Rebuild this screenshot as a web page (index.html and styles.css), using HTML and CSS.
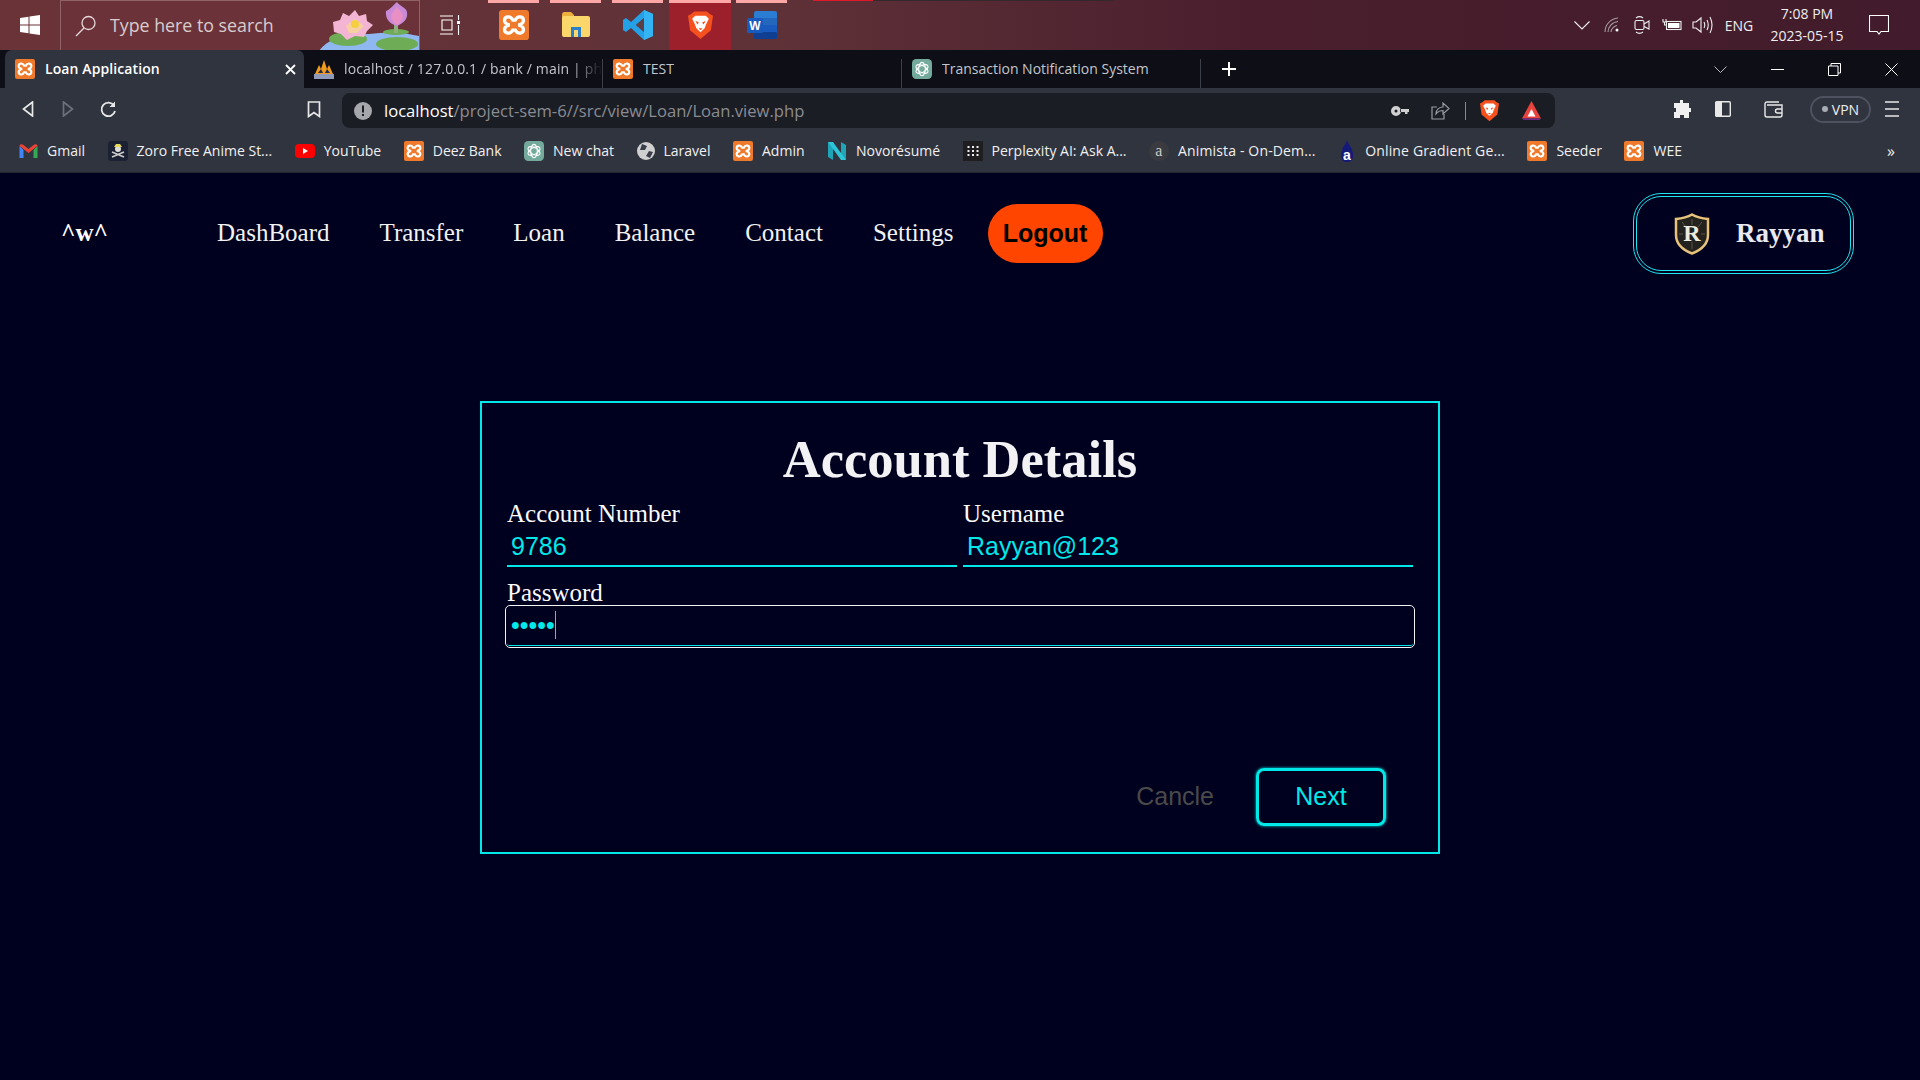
FILE: index.html
```html
<!DOCTYPE html>
<html lang="en">
<head>
    <meta charset="UTF-8">
    <title>Loan Application</title>
    <link rel="stylesheet" href="styles.css">
</head>
<body>
    <svg class="defs" width="0" height="0">
        <symbol id="xampp" viewBox="0 0 24 24">
            <rect width="24" height="24" rx="2.5" fill="#ef7a2b"/>
            <path d="M11 8C9 4 4 5 4.500 9C4.800 10.800 6.500 11.500 8.500 12C6.500 12.500 4.800 13.200 4.500 15C4 19 9 20 11 16H13C15 20 20 19 19.500 15C19.200 13.200 17.500 12.500 15.500 12C17.500 11.500 19.200 10.800 19.500 9C20 5 15 4 13 8Z" fill="none" stroke="#fff" stroke-width="2.600"/>
        </symbol>
        <symbol id="gpt" viewBox="0 0 24 24">
            <rect width="24" height="24" rx="5" fill="#74aa9c"/>
            <g fill="none" stroke="#fff" stroke-width="1.300">
                <ellipse cx="12" cy="12" rx="4" ry="8"/>
                <ellipse cx="12" cy="12" rx="4" ry="8" transform="rotate(60 12 12)"/>
                <ellipse cx="12" cy="12" rx="4" ry="8" transform="rotate(120 12 12)"/>
            </g>
        </symbol>
        <symbol id="brave" viewBox="0 0 24 28">
            <path d="M6 1H18L21 3.500L24 5L22 19L12 27.500L2 19L0 5L3 3.500Z" fill="#f4511e"/>
            <path d="M7 5H17L20 8L17.500 13L16 17L12 21L8 17L6.500 13L4 8Z" fill="#fff"/>
            <path d="M7 10L10.500 11.500L9 13.500ZM17 10L13.500 11.500L15 13.500ZM10 17H14L12 19Z" fill="#f4511e"/>
        </symbol>
    </svg>

    <div class="taskbar">
        <div class="start">
            <svg width="20" height="20" viewBox="0 0 20 20" fill="#fff"><path d="M0 3L8.500 1.700V9.500H0ZM9.500 1.500L20 0V9.500H9.500ZM0 10.500H8.500V18.300L0 17ZM9.500 10.500H20V20L9.500 18.500Z"/></svg>
        </div>
        <div class="search">
            <svg class="search-icon" width="22" height="22" viewBox="0 0 22 22" fill="none" stroke="#e6d9da" stroke-width="1.300"><circle cx="13.500" cy="8" r="6.500"/><path d="M9 13L1 21"/></svg>
            <span class="search-text">Type here to search</span>
            <svg class="lotus" width="100" height="50" viewBox="0 0 100 50">
                <path d="M0 50C8 38 25 32 50 33C75 30 90 33 100 35V50Z" fill="#90b8f0"/>
                <ellipse cx="29" cy="38" rx="19" ry="7" fill="#6eac55"/>
                <ellipse cx="78" cy="43" rx="21" ry="7" fill="#6eac55"/>
                <ellipse cx="77" cy="31" rx="13" ry="3" fill="#6eac55"/>
                <path d="M14 21L21 19L24 12L30 15L36 9L40 15L47 13L48 20L54 24L48 30L45 36L36 35L28 39L22 33L15 31Z" fill="#f4b4d4"/>
                <path d="M27 25L36 18L45 25L38 32H30Z" fill="#f6d0a0"/>
                <circle cx="36" cy="23" r="4" fill="#f5cf3f"/>
                <path d="M75 32H79V22H75Z" fill="#8fb07a"/>
                <path d="M67 10C72 8 74 4 78 1C80 5 87 6 88 11C89 18 85 22 78 25C71 23 66 18 67 10Z" fill="#c98ad8"/>
                <path d="M72 14C74 11 76 8 78 6C81 10 84 12 84 16C83 20 80 23 78 24C75 22 72 19 72 14Z" fill="#ea8fc4"/>
            </svg>
        </div>
        <div class="taskview">
            <svg width="20" height="20" viewBox="0 0 20 20" fill="none" stroke="#fff" stroke-width="1.100"><path d="M0 1H13M0 19H13M2 5H12V15H2ZM18.500 0V5M18.500 10V20"/><rect x="17" y="6" width="3" height="3" fill="#fff" stroke="none"/></svg>
        </div>
        <div class="apps">
            <div class="app open"><svg width="30" height="30"><use href="#xampp"/></svg></div>
            <div class="app open">
                <svg width="28" height="26" viewBox="0 0 28 26"><path d="M0 3C0 1 1 0 2 0H9L12 3V8H0Z" fill="#eeb03c"/><rect y="4" width="28" height="21" rx="2" fill="#fbd66a"/><path d="M9 25V15H19V25H16V18H12V25Z" fill="#2a7fc9"/></svg>
            </div>
            <div class="app open">
                <svg width="30" height="30" viewBox="0 0 30 30"><path d="M21 0L30 4V26L21 30L8 18L3 22L0 20V10L3 8L8 12ZM21 8L13 15L21 22Z" fill="#23a0e6"/><path d="M21 0L30 4V26L21 30Z" fill="#34b4f2"/><path d="M21 8L21 22L13 15Z" fill="#5b4045"/></svg>
            </div>
            <div class="app active"><svg width="25" height="30"><use href="#brave"/></svg></div>
            <div class="app open">
                <svg width="30" height="28" viewBox="0 0 30 28"><rect x="7" width="23" height="28" rx="2" fill="#2b7cd3"/><rect x="7" y="7" width="23" height="7" fill="#2368bd"/><rect x="7" y="14" width="23" height="7" fill="#185abd"/><rect x="7" y="21" width="23" height="7" rx="1" fill="#103f91"/><rect y="7" width="16" height="15" rx="1.500" fill="#185abd"/><text x="8" y="19" class="word-w" text-anchor="middle">W</text></svg>
            </div>
            <div class="app-progress"></div>
        </div>
        <div class="tray">
            <div class="tray-cell"><svg width="16" height="9" viewBox="0 0 16 9" fill="none" stroke="#eee" stroke-width="1.100"><path d="M.5 .5L8 8L15.500 .5"/></svg></div>
            <div class="tray-cell"><svg width="16" height="16" viewBox="0 0 16 16" fill="none" stroke="#a59ba0" stroke-width="1.100"><path d="M1 15C1 8 6 2 14 1M4 15C4 10 8 5 14 4.500M7 15C7 12 10 9 13 8.500"/><circle cx="13" cy="13" r="1.500" fill="#fff" stroke="none"/></svg></div>
            <div class="tray-cell"><svg width="16" height="18" viewBox="0 0 16 18" fill="none" stroke="#eee" stroke-width="1.100"><rect x="1" y="4.500" width="9" height="9" rx="1.500"/><path d="M10 8L15 5V13L10 10.500M2 2C4 .5 7 .5 9 2M2 16C4 17.500 7 17.500 9 16"/></svg></div>
            <div class="tray-cell"><svg width="20" height="12" viewBox="0 0 20 12" fill="none" stroke="#eee" stroke-width="1.100"><rect x="4.500" y="2.500" width="14.500" height="8"/><rect x="6" y="4" width="11.500" height="5" fill="#fff" stroke="none"/><path d="M1 0V3H4V0M2.500 3V6H5"/></svg></div>
            <div class="tray-cell"><svg width="21" height="18" viewBox="0 0 21 18" fill="none" stroke="#eee" stroke-width="1.100"><path d="M1 6H4L9 2V16L4 12H1ZM12 6C13 8 13 10 12 12M15 4C16.500 7 16.500 11 15 14M18 1C20.500 6 20.500 12 18 17"/></svg></div>
            <div class="tray-lang">ENG</div>
            <div class="clock"><div>7:08 PM</div><div>2023-05-15</div></div>
            <div class="notify"><svg width="20" height="20" viewBox="0 0 20 20" fill="none" stroke="#fff" stroke-width="1.100"><path d="M.5 .5H19.500V16.500H12L10 19L8 16.500H.5Z"/></svg></div>
        </div>
    </div>

    <div class="tabstrip">
        <div class="tab tab-active">
            <svg class="fav" width="20" height="20"><use href="#xampp"/></svg>
            <span class="tab-title">Loan Application</span>
            <svg class="tab-close" width="11" height="11" viewBox="0 0 11 11" stroke="#fff" stroke-width="1.800"><path d="M1 1L10 10M10 1L1 10"/></svg>
        </div>
        <div class="tab">
            <svg class="fav" width="20" height="20" viewBox="0 0 20 20"><path d="M1 15L5 6L7 10L10 1L13 10L15 6L19 15Z" fill="#f29a1f"/><path d="M4 14L7 10L9 14M11 14L13 10L16 14" fill="#1d2a4a"/><rect y="15" width="20" height="5" fill="#8f9ab8"/></svg>
            <span class="tab-title tab-fade">localhost / 127.0.0.1 / bank / main | ph</span>
        </div>
        <div class="tab">
            <svg class="fav" width="20" height="20"><use href="#xampp"/></svg>
            <span class="tab-title">TEST</span>
        </div>
        <div class="tab">
            <svg class="fav" width="20" height="20"><use href="#gpt"/></svg>
            <span class="tab-title">Transaction Notification System</span>
        </div>
        <svg class="new-tab" width="16" height="16" viewBox="0 0 16 16" stroke="#fff" stroke-width="2"><path d="M8 1V15M1 8H15"/></svg>
        <div class="window-btns">
            <div class="win-btn"><svg width="13" height="7" viewBox="0 0 13 7" fill="none" stroke="#bbb"><path d="M.5 .5L6.500 6.500L12.500 .5"/></svg></div>
            <div class="win-btn"><svg width="13" height="1" viewBox="0 0 13 1" stroke="#fff"><path d="M0 .5H13"/></svg></div>
            <div class="win-btn"><svg width="13" height="13" viewBox="0 0 13 13" fill="none" stroke="#fff"><path d="M.5 3H10V12.500H.5ZM3 3V.5H12.500V10H10"/></svg></div>
            <div class="win-btn"><svg width="13" height="13" viewBox="0 0 13 13" stroke="#fff"><path d="M.5 .5L12.500 12.500M12.500 .5L.5 12.500"/></svg></div>
        </div>
    </div>

    <div class="toolbar">
        <div class="nav-btns">
            <div class="tool-cell"><svg width="12" height="16" viewBox="0 0 12 16" fill="none" stroke="#e8e8e8" stroke-width="1.700"><path d="M10.500 1V15L1.500 8Z"/></svg></div>
            <div class="tool-cell"><svg width="12" height="16" viewBox="0 0 12 16" fill="none" stroke="#6d707a" stroke-width="1.700"><path d="M1.500 1V15L10.500 8Z"/></svg></div>
            <div class="tool-cell"><svg width="17" height="17" viewBox="0 0 17 17" fill="none" stroke="#e8e8e8" stroke-width="1.800"><path d="M14 4.500A6.800 6.800 0 1 0 15 10"/><path d="M15 .5V6H9.500" fill="#e8e8e8" stroke="none"/></svg></div>
            <div class="bookmark-btn"><svg width="14" height="17" viewBox="0 0 14 17" fill="none" stroke="#e8e8e8" stroke-width="1.700"><path d="M1.500 1H12.500V15.500L7 11.500L1.500 15.500Z"/></svg></div>
        </div>
        <div class="address">
            <svg class="warn" width="18" height="18" viewBox="0 0 18 18"><circle cx="9" cy="9" r="9" fill="#a5a7ad"/><rect x="8" y="3.500" width="2" height="7" fill="#1b1d24"/><rect x="8" y="12" width="2" height="2" fill="#1b1d24"/></svg>
            <span class="url"><span class="url-host">localhost</span>/project-sem-6//src/view/Loan/Loan.view.php</span>
            <div class="address-icons">
                <svg class="key" width="18" height="10" viewBox="0 0 18 10" fill="#d0d0d0"><path d="M5 0A5 5 0 1 1 5 10A5 5 0 0 1 5 0ZM5 3.500A1.500 1.500 0 1 0 5 6.500A1.500 1.500 0 0 0 5 3.500ZM9 3H18V6H16.500V8H14V6H9Z" fill-rule="evenodd"/></svg>
                <svg class="share" width="19" height="19" viewBox="0 0 19 19" fill="none" stroke="#9a9ca4" stroke-width="1.200"><path d="M6 6H1V18H13V13"/><path d="M5 13C5 8 9 6 12 6V2L18 7.500L12 13V9.500C9 9.500 7 10.500 5 13Z"/></svg>
                <span class="addr-sep"></span>
                <svg class="addr-brave" width="19" height="23"><use href="#brave"/></svg>
                <svg width="19" height="19" viewBox="0 0 19 19"><path d="M9.500 0L19 17.500H0Z" fill="#e8433d"/><path d="M9.500 8L13.500 15.500H5.500Z" fill="#fff"/><path d="M0 17.500H19L17.500 19H1.500Z" fill="#6f2a8c"/></svg>
            </div>
        </div>
        <div class="tool-right">
            <svg class="puzzle" width="18" height="18" viewBox="0 0 18 18" fill="#f0f0f0"><path d="M7 0H10V3H16V8H18V12H16V18H11V15H7V18H1V12H3V8H1V3H7Z"/></svg>
            <svg class="sidebar" width="16" height="16" viewBox="0 0 16 16" fill="none" stroke="#e8e8e8" stroke-width="1.400"><rect x=".7" y=".7" width="14.600" height="14.600" rx="1"/><rect x="1" y="1" width="6" height="14" fill="#e8e8e8" stroke="none"/></svg>
            <svg class="wallet" width="19" height="17" viewBox="0 0 19 17" fill="none" stroke="#e8e8e8" stroke-width="1.400"><path d="M15 1H3C1.500 1 1 2 1 3V14C1 15.500 2 16 3 16H16C17 16 18 15.500 18 14V4H3"/><path d="M18 8H13.500C12 8 11.500 9 11.500 10C11.500 11 12 12 13.500 12H18"/></svg>
            <div class="vpn"><span class="vpn-dot"></span>VPN</div>
            <svg class="menu" width="14" height="16" viewBox="0 0 14 16" stroke="#e8e8e8" stroke-width="1.500"><path d="M0 1H14M0 8H14M0 15H14"/></svg>
        </div>
    </div>

    <div class="bookmarks">
        <div class="bm">
            <svg width="19" height="14" viewBox="0 0 18 14"><path d="M0 2V14H4V6Z" fill="#4285f4"/><path d="M14 6V14H18V2Z" fill="#34a853"/><path d="M0 2C0 0 2.500 -.5 4 1L9 5L14 1C15.500 -.5 18 0 18 2L9 9Z" fill="#ea4335"/></svg>
            <span>Gmail</span>
        </div>
        <div class="bm">
            <svg width="20" height="20" viewBox="0 0 20 20"><rect width="20" height="20" rx="3" fill="#1c2033"/><circle cx="10" cy="8" r="3" fill="#ddd"/><path d="M6 6H14L12 3H8Z" fill="#e7d857"/><path d="M4 16L16 11M4 11L16 16" stroke="#ccc" stroke-width="1.500"/></svg>
            <span>Zoro Free Anime St...</span>
        </div>
        <div class="bm">
            <svg width="20" height="14" viewBox="0 0 20 14"><rect width="20" height="14" rx="4" fill="#f00"/><path d="M8 4L13 7L8 10Z" fill="#fff"/></svg>
            <span>YouTube</span>
        </div>
        <div class="bm"><svg width="20" height="20"><use href="#xampp"/></svg><span>Deez Bank</span></div>
        <div class="bm"><svg width="20" height="20"><use href="#gpt"/></svg><span>New chat</span></div>
        <div class="bm">
            <svg width="18" height="18" viewBox="0 0 18 18"><circle cx="9" cy="9" r="9" fill="#d0d0d0"/><path d="M5 2L10 4L8 8L3 8ZM12 9L16 10L13 16L9 14Z" fill="#3a3e4a"/></svg>
            <span>Laravel</span>
        </div>
        <div class="bm"><svg width="20" height="20"><use href="#xampp"/></svg><span>Admin</span></div>
        <div class="bm">
            <svg width="20" height="20" viewBox="0 0 20 20"><path d="M1 1L6 4V19L1 16Z" fill="#1fa5b8"/><path d="M14 1L19 4V19L14 16Z" fill="#1fa5b8"/><path d="M1 1L6 1L19 19H14Z" fill="#2cc6d8"/></svg>
            <span>Novorésumé</span>
        </div>
        <div class="bm">
            <svg width="20" height="20" viewBox="0 0 20 20"><rect width="20" height="20" fill="#1e1e20"/><path d="M5.500 5V15M10 5V15M14.500 5V15" stroke="#eee" stroke-width="2" stroke-dasharray="2 2"/></svg>
            <span>Perplexity AI: Ask A...</span>
        </div>
        <div class="bm bm-wide">
            <svg width="20" height="20" viewBox="0 0 20 20"><circle cx="10" cy="10" r="10" fill="#3a3b40"/><text x="10" y="15" class="animista-a" text-anchor="middle">a</text></svg>
            <span>Animista - On-Dem...</span>
        </div>
        <div class="bm bm-wide">
            <svg width="18" height="22" viewBox="0 0 18 22"><path d="M9 0C10 4 14 8 14 10H4C4 8 8 4 9 0Z" fill="#141a7a"/><rect x="3" y="9" width="12" height="13" rx="5" fill="#141a7a"/><text x="9" y="20" class="gradient-a" text-anchor="middle">a</text></svg>
            <span>Online Gradient Ge...</span>
        </div>
        <div class="bm"><svg width="20" height="20"><use href="#xampp"/></svg><span>Seeder</span></div>
        <div class="bm"><svg width="20" height="20"><use href="#xampp"/></svg><span>WEE</span></div>
        <span class="bm-more">»</span>
    </div>

    <nav class="nav">
        <div class="logo">^w^</div>
        <a class="nav-link">DashBoard</a>
        <a class="nav-link">Transfer</a>
        <a class="nav-link">Loan</a>
        <a class="nav-link">Balance</a>
        <a class="nav-link">Contact</a>
        <a class="nav-link">Settings</a>
        <button class="logout">Logout</button>
        <div class="profile">
            <svg width="36" height="42" viewBox="0 0 36 42">
                <path d="M18 1.500C23 4.500 28 5.500 34 6V22C34 31 27 37 18 40.500C9 37 2 31 2 22V6C8 5.500 13 4.500 18 1.500Z" fill="#23221e" stroke="#e6c27a" stroke-width="2.500"/>
                <path d="M18 6V12M18 29V36M5 21H9M27 21H31M8 9L12 14M28 9L24 14" stroke="#59564a"/>
                <text x="18" y="28" class="shield-r" text-anchor="middle">R</text>
            </svg>
            <span class="profile-name">Rayyan</span>
        </div>
    </nav>

    <main class="card">
        <h1 class="card-title">Account Details</h1>
        <form class="card-form">
            <div class="row">
                <div class="field">
                    <label class="field-label">Account Number</label>
                    <input class="field-input" type="text" value="9786">
                </div>
                <div class="field">
                    <label class="field-label">Username</label>
                    <input class="field-input" type="text" value="Rayyan@123">
                </div>
            </div>
            <div class="field field-full">
                <label class="field-label">Password</label>
                <div class="password-box">
                    <span class="dots">•••••</span><span class="caret"></span>
                </div>
            </div>
            <div class="actions">
                <button type="button" class="btn-cancel">Cancle</button>
                <button type="button" class="btn-next">Next</button>
            </div>
        </form>
    </main>
</body>
</html>
```

FILE: styles.css
```css
* {
    box-sizing: border-box;
}
html, body {
    height: 100%;
}
body {
    margin: 0;
    background-color: #00001f;
    font-family: "Liberation Serif", serif;
    overflow: hidden;
}
.defs {
    display: block;
    height: 0;
}
svg {
    flex-shrink: 0;
    display: block;
}

/* windows taskbar */
.taskbar {
    height: 50px;
    display: flex;
    align-items: stretch;
    background: linear-gradient(90deg, #6a3338 0%, #5f3238 40%, #4a1e2d 65%, #421c2c 100%);
    font-family: "Open Sans", sans-serif;
    color: #eee;
}
.start {
    width: 60px;
    display: flex;
    align-items: center;
    justify-content: center;
}
.search {
    width: 360px;
    display: flex;
    align-items: center;
    background-color: #6b3339;
    border: 1px solid #8f6265;
    border-bottom: none;
    overflow: hidden;
}
.search-icon {
    margin-left: 14px;
}
.search-text {
    margin-left: 13px;
    padding-bottom: 2px;
    font-size: 17.8px;
    color: #d9cccd;
    white-space: nowrap;
}
.lotus {
    margin-left: auto;
    margin-top: 1px;
}
.taskview {
    width: 63px;
    display: flex;
    align-items: center;
    justify-content: center;
    padding-right: 4px;
}
.apps {
    display: flex;
}
.app {
    width: 62px;
    display: flex;
    align-items: center;
    justify-content: center;
    position: relative;
}
.app.open::before, .app.active::before {
    content: "";
    position: absolute;
    top: 0;
    left: 5px;
    right: 6px;
    height: 3px;
    background-color: #ffa6a6;
}
.app.active {
    background-color: #9c202c;
}
.app.active::before {
    left: 0;
    right: 0;
}
.word-w {
    font-family: "Liberation Sans", sans-serif;
    font-size: 12px;
    font-weight: 700;
    fill: #fff;
}
.app-progress {
    width: 300px;
    height: 1px;
    margin-left: 20px;
    background: linear-gradient(90deg, #e0182c 20%, #33282c 20%);
}
.tray {
    margin-left: auto;
    display: flex;
    align-items: center;
    padding-right: 15px;
}
.tray-cell {
    width: 30px;
    display: flex;
    justify-content: center;
}
.tray-lang {
    width: 44px;
    text-align: center;
    font-size: 14px;
}
.clock {
    width: 92px;
    text-align: center;
    font-size: 14px;
    line-height: 22px;
}
.notify {
    width: 52px;
    display: flex;
    justify-content: center;
}

/* browser tabs */
.tabstrip {
    height: 38px;
    display: flex;
    align-items: center;
    padding-left: 5px;
    background-color: #0d0e16;
    font-family: "Open Sans", sans-serif;
    font-size: 14px;
    color: #c3c6cc;
}
.tab {
    width: 299px;
    height: 38px;
    display: flex;
    align-items: center;
    padding: 0 5px 0 10px;
    position: relative;
}
.tab + .tab::after {
    content: "";
    position: absolute;
    right: 0;
    top: 9px;
    height: 29px;
    width: 1px;
    background-color: #3e4049;
}
.tab-active {
    background-color: #30343f;
    border-radius: 7px 7px 0 0;
    color: #fff;
    font-weight: 600;
}
.tab-title {
    margin-left: 10px;
    padding-bottom: 2px;
    white-space: nowrap;
    flex: 1;
}
.tab-active .tab-title {
    letter-spacing: .1px;
}
.tab-fade {
    letter-spacing: .15px;
    -webkit-mask-image: linear-gradient(90deg, #000 88%, transparent 100%);
    mask-image: linear-gradient(90deg, #000 88%, transparent 100%);
}
.tab-close {
    margin-right: 3px;
}
.new-tab {
    margin-left: 20px;
}
.window-btns {
    margin-left: auto;
    display: flex;
    align-items: center;
}
.win-btn {
    width: 57px;
    display: flex;
    justify-content: center;
}

/* address bar row */
.toolbar {
    height: 42px;
    display: flex;
    align-items: center;
    background-color: #30343f;
    font-family: "Open Sans", sans-serif;
}
.nav-btns {
    width: 342px;
    padding-left: 8px;
    display: flex;
    align-items: center;
}
.tool-cell {
    width: 40px;
    display: flex;
    justify-content: center;
}
.bookmark-btn {
    margin-left: auto;
    margin-right: 21px;
}
.address {
    width: 1213px;
    height: 35px;
    margin-top: 3px;
    display: flex;
    align-items: center;
    padding-left: 12px;
    background-color: #1b1d24;
    border-radius: 8px;
    font-size: 16.6px;
    color: #8a8c93;
}
.url {
    margin-left: 12px;
    white-space: nowrap;
}
.url-host {
    color: #fff;
}
.address-icons {
    margin-left: auto;
    display: flex;
    align-items: center;
    padding-right: 14px;
}
.share {
    margin-left: 22px;
}
.addr-sep {
    width: 1px;
    height: 18px;
    margin: 0 14px 0 15px;
    background-color: #888;
}
.addr-brave {
    margin-right: 23px;
}
.tool-right {
    flex: 1;
    display: flex;
    align-items: center;
    padding-left: 118px;
}
.sidebar {
    margin-left: 24px;
}
.wallet {
    margin-left: 33px;
}
.vpn {
    width: 61px;
    height: 27px;
    margin-left: 27px;
    display: flex;
    align-items: center;
    justify-content: center;
    gap: 4px;
    border: 2px solid #4e5260;
    border-radius: 14px;
    font-size: 14px;
    color: #eee;
}
.vpn-dot {
    width: 6px;
    height: 6px;
    border-radius: 50%;
    background-color: #a9acb5;
}
.menu {
    margin-left: 14px;
}

/* bookmarks row */
.bookmarks {
    height: 43px;
    display: flex;
    align-items: center;
    gap: 22.5px;
    padding-left: 19px;
    padding-bottom: 1px;
    background-color: #30343f;
    border-bottom: 1px solid #24262f;
    font-family: "Open Sans", sans-serif;
    font-size: 14px;
    color: #f0f0f0;
}
.bm {
    display: flex;
    align-items: center;
    gap: 9px;
    white-space: nowrap;
}
.bm-wide {
    letter-spacing: .15px;
}
.bm-more {
    margin-left: auto;
    margin-right: 25px;
    font-size: 16px;
}
.animista-a {
    font-family: "Liberation Serif", serif;
    font-size: 16px;
    fill: #ccc;
}
.gradient-a {
    font-family: "Liberation Sans", sans-serif;
    font-size: 14px;
    font-weight: 700;
    fill: #fff;
}

/* site nav */
.nav {
    display: flex;
    align-items: center;
    padding: 20px 66px 0 61px;
    color: #fff;
}
.logo {
    width: 156px;
    padding-bottom: 2px;
    font-size: 25px;
    font-weight: 700;
}
.nav-link {
    margin-right: 50px;
    padding-bottom: 2px;
    font-size: 25px;
    color: #f2f2f2;
}
.nav-link:nth-child(7) {
    margin-right: 34px;
}
.logout {
    width: 115px;
    height: 59px;
    border: none;
    border-radius: 30px;
    background-color: #ff4500;
    font-family: "Liberation Sans", sans-serif;
    font-size: 25px;
    font-weight: 700;
    color: #000;
    padding: 0;
}
.profile {
    width: 221px;
    height: 81px;
    margin-left: auto;
    display: flex;
    align-items: center;
    padding-left: 37px;
    gap: 26px;
    border: 4px double #1fe6ee;
    border-radius: 28px;
}
.profile-name {
    font-size: 27px;
    font-weight: 700;
    color: #e9e9ef;
}
.shield-r {
    font-family: "Liberation Serif", serif;
    font-size: 24px;
    font-weight: 700;
    fill: #ecebe0;
}

/* account card */
.card {
    width: 960px;
    height: 453px;
    margin: 127px auto 0;
    padding: 26px 25px 26px;
    display: flex;
    flex-direction: column;
    border: 2px solid #00e8e8;
}
.card-title {
    margin: 0;
    text-align: center;
    font-size: 52.5px;
    font-weight: 700;
    line-height: 60px;
    color: #f2f2f5;
}
.card-form {
    flex: 1;
    display: flex;
    flex-direction: column;
    margin-top: 10px;
}
.row {
    display: flex;
    gap: 6px;
}
.field {
    flex: 1;
}
.field-label {
    display: block;
    font-size: 25px;
    line-height: 29px;
    color: #fbfbfb;
}
.field-input {
    display: block;
    width: 100%;
    height: 39px;
    padding: 0 4px;
    background: transparent;
    border: none;
    border-bottom: 2px solid #00e8e8;
    font-family: "Liberation Sans", sans-serif;
    font-size: 25px;
    color: #00e8e8;
    outline: none;
}
.field-full {
    flex: none;
    margin-top: 11px;
}
.password-box {
    height: 39px;
    display: flex;
    align-items: center;
    padding: 0 0 2px 4px;
    border-bottom: 1px solid #00e8e8;
    outline: 1px solid #f4f4f4;
    outline-offset: 1px;
    border-radius: 3px;
}
.dots {
    font-family: "Liberation Sans", sans-serif;
    font-size: 25px;
    color: #00e8e8;
    line-height: 28px;
}
.caret {
    width: 1px;
    height: 28px;
    background-color: #00e8e8;
}
.actions {
    margin-top: auto;
    display: flex;
    align-items: center;
    justify-content: flex-end;
    padding-right: 27px;
    gap: 42px;
    font-family: "Liberation Sans", sans-serif;
}
.btn-cancel {
    padding: 0 0 2px;
    background: none;
    border: none;
    font: inherit;
    font-size: 25px;
    color: #4a4a4a;
}
.btn-next {
    width: 130px;
    height: 58px;
    padding: 0 0 2px;
    background: none;
    border: 3px solid #00e8e8;
    border-radius: 8px;
    box-shadow: 0 0 3px #00e8e8;
    font: inherit;
    font-size: 25px;
    color: #00e8e8;
}
```
